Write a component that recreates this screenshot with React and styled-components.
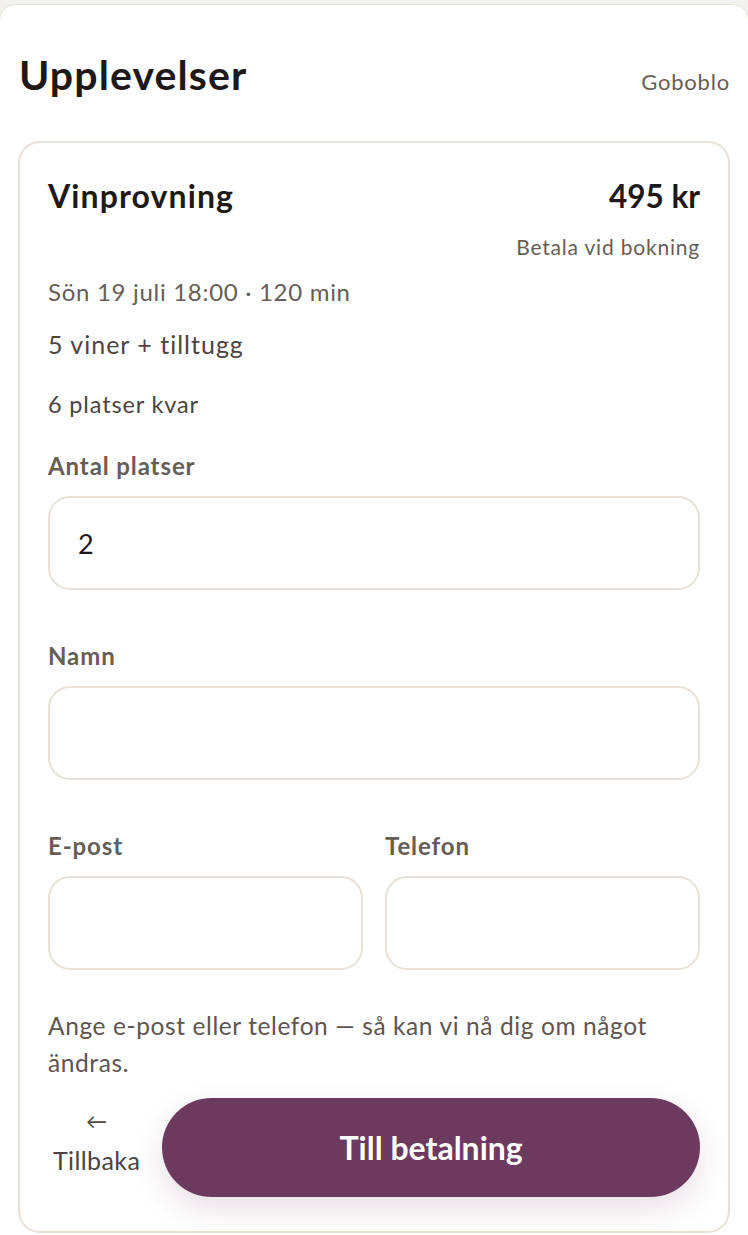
import styled, { createGlobalStyle } from 'styled-components';

const Global = createGlobalStyle`
  * { box-sizing: border-box; }
  body {
    margin: 0;
    background: #f3f1ed;
    font-family: 'Lato', 'Open Sans', sans-serif;
    overflow: hidden;
  }
`;

function App() {
  return (
    <>
      <Global />
      <Shell>
        <Header>
          <PageTitle>Upplevelser</PageTitle>
          <Brand>Goboblo</Brand>
        </Header>
        <Card>
          <TitleRow>
            <EventName>Vinprovning</EventName>
            <Price>495 kr</Price>
          </TitleRow>
          <PayNote>Betala vid bokning</PayNote>
          <Meta>Sön 19 juli 18:00 · 120 min</Meta>
          <Description>5 viner + tilltugg</Description>
          <Seats>6 platser kvar</Seats>

          <Field>
            <Label htmlFor="seats">Antal platser</Label>
            <Input id="seats" defaultValue="2" />
          </Field>
          <Field>
            <Label htmlFor="name">Namn</Label>
            <Input id="name" />
          </Field>
          <TwoCols>
            <Field>
              <Label htmlFor="email">E-post</Label>
              <Input id="email" />
            </Field>
            <Field>
              <Label htmlFor="phone">Telefon</Label>
              <Input id="phone" />
            </Field>
          </TwoCols>

          <Help>Ange e-post eller telefon — så kan vi nå dig om något ändras.</Help>

          <Actions>
            <BackButton>
              <Arrow>←</Arrow>
              <span>Tillbaka</span>
            </BackButton>
            <PayButton>Till betalning</PayButton>
          </Actions>
        </Card>
      </Shell>
    </>
  );
}

export default App;

const Shell = styled.div`
  margin: 4px 0 0 -1px;
  width: calc(100% + 2px);
  min-height: 1300px;
  background: #ffffff;
  border: 1.5px solid #e7e1d8;
  border-radius: 16px;
  padding: 0 18px;
`;

const Header = styled.div`
  display: flex;
  justify-content: space-between;
  align-items: baseline;
  padding: 46px 0 0 1px;
  margin-bottom: 42px;
`;

const PageTitle = styled.h1`
  margin: 0;
  font-size: 41px;
  font-weight: 700;
  line-height: 48px;
  letter-spacing: 1.1px;
  color: #1e1916;
`;

const Brand = styled.div`
  font-size: 22px;
  letter-spacing: 0.8px;
  color: #675d57;
`;

const Card = styled.div`
  border: 2px solid #e7e1d8;
  border-radius: 22px;
  padding: 34px 28px 34px;
`;

const TitleRow = styled.div`
  display: flex;
  justify-content: space-between;
  align-items: baseline;
`;

const EventName = styled.h2`
  margin: 0;
  font-size: 32px;
  font-weight: 700;
  line-height: 38px;
  letter-spacing: 1.1px;
  color: #1e1916;
`;

const Price = styled.div`
  font-size: 31.5px;
  font-weight: 700;
  color: #1e1916;
`;

const PayNote = styled.div`
  margin-top: 19px;
  text-align: right;
  font-size: 21px;
  line-height: 26px;
  letter-spacing: 0.8px;
  color: #675d57;
`;

const Meta = styled.div`
  margin-top: 17px;
  font-size: 24px;
  line-height: 30px;
  letter-spacing: 0.7px;
  color: #675d57;
`;

const Description = styled.div`
  margin-top: 22px;
  font-size: 25px;
  line-height: 30px;
  letter-spacing: 1px;
  color: #4d4440;
`;

const Seats = styled.div`
  margin-top: 30px;
  font-size: 23.5px;
  line-height: 30px;
  letter-spacing: 0.85px;
  color: #4d4440;
`;

const Field = styled.div`
  display: flex;
  flex-direction: column;
  margin-top: 32px;
  min-width: 0;

  & + & {
    margin-top: 51px;
  }
`;

const Label = styled.label`
  font-size: 24px;
  font-weight: 700;
  line-height: 30px;
  letter-spacing: 0.9px;
  color: #675d57;
  margin-bottom: 15px;
`;

const Input = styled.input`
  width: 100%;
  height: 94px;
  border: 2px solid #e7e1d8;
  border-radius: 22px;
  background: #ffffff;
  padding: 0 28px;
  font-family: inherit;
  font-size: 27px;
  color: #1e1916;
  outline: none;
`;

const TwoCols = styled.div`
  display: grid;
  grid-template-columns: 1fr 1fr;
  gap: 22px;
  margin-top: 51px;

  & > ${Field} {
    margin-top: 0;
  }
`;

const Help = styled.p`
  margin: 37px 0 0;
  font-size: 24.5px;
  line-height: 37px;
  letter-spacing: 0.6px;
  color: #5e5450;
`;

const Actions = styled.div`
  display: flex;
  align-items: center;
  gap: 22px;
  margin-top: 17px;
`;

const BackButton = styled.button`
  display: flex;
  flex-direction: column;
  align-items: center;
  gap: 12px;
  border: none;
  background: none;
  padding: 0 0 12px 5px;
  font-family: inherit;
  font-size: 25px;
  line-height: 30px;
  letter-spacing: 0.4px;
  color: #4d4440;
  cursor: pointer;
`;

const Arrow = styled.span`
  font-size: 21px;
  line-height: 24px;
`;

const PayButton = styled.button`
  flex: 1;
  height: 99px;
  border: none;
  border-radius: 50px;
  background: #6d3a5f;
  color: #ffffff;
  font-family: inherit;
  font-size: 32px;
  font-weight: 700;
  box-shadow: 0 12px 30px rgba(109, 58, 95, 0.16);
  cursor: pointer;
`;
